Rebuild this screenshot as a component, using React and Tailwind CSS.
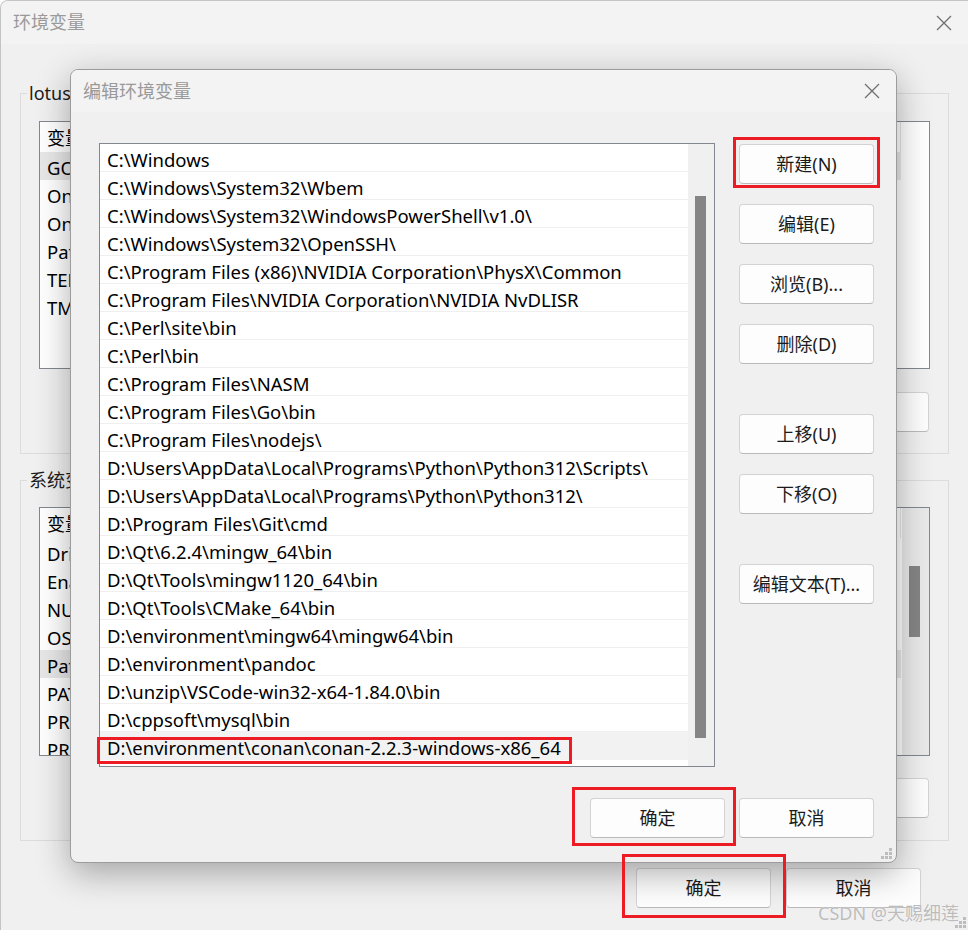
import React from "react";

const PATHS = String.raw`C:\Windows
C:\Windows\System32\Wbem
C:\Windows\System32\WindowsPowerShell\v1.0\
C:\Windows\System32\OpenSSH\
C:\Program Files (x86)\NVIDIA Corporation\PhysX\Common
C:\Program Files\NVIDIA Corporation\NVIDIA NvDLISR
C:\Perl\site\bin
C:\Perl\bin
C:\Program Files\NASM
C:\Program Files\Go\bin
C:\Program Files\nodejs\
D:\Users\AppData\Local\Programs\Python\Python312\Scripts\
D:\Users\AppData\Local\Programs\Python\Python312\
D:\Program Files\Git\cmd
D:\Qt\6.2.4\mingw_64\bin
D:\Qt\Tools\mingw1120_64\bin
D:\Qt\Tools\CMake_64\bin
D:\environment\mingw64\mingw64\bin
D:\environment\pandoc
D:\unzip\VSCode-win32-x64-1.84.0\bin
D:\cppsoft\mysql\bin
D:\environment\conan\conan-2.2.3-windows-x86_64`.split("\n");

const USER_VARS = ["GOPATH", "OneDrive", "OneDriveConsumer", "Path", "TEMP", "TMP"];
const SYS_VARS = [
  "DriverData",
  "EnableLog",
  "NUMBER_OF_PROCESSORS",
  "OS",
  "Path",
  "PATHEXT",
  "PROCESSOR_ARCHITECTURE",
  "PROCESSOR_IDENTIFIER",
  "PROCESSOR_LEVEL",
];

function CloseX() {
  return (
    <svg width="16" height="16" viewBox="0 0 16 16">
      <path d="M1 1L15 15M15 1L1 15" stroke="#707070" strokeWidth="1.3" fill="none" />
    </svg>
  );
}

function Grip() {
  return (
    <svg width="12" height="12" viewBox="0 0 12 12">
      <rect x="8" y="0" width="3" height="3" fill="#bdbdbd" />
      <rect x="4" y="4" width="3" height="3" fill="#bdbdbd" />
      <rect x="8" y="4" width="3" height="3" fill="#bdbdbd" />
      <rect x="0" y="8" width="3" height="3" fill="#bdbdbd" />
      <rect x="4" y="8" width="3" height="3" fill="#bdbdbd" />
      <rect x="8" y="8" width="3" height="3" fill="#bdbdbd" />
    </svg>
  );
}

function Btn({ children, className = "" }) {
  return (
    <div
      className={`flex h-[40px] w-[135px] shrink-0 items-center justify-center rounded-[4px] border border-[#d3d3d3] border-b-[#bababa] bg-[#fdfdfd] text-[18px] text-[#1b1b1b] ${className}`}
    >
      {children}
    </div>
  );
}

function BgList({ items, selected, scroll, height }) {
  return (
    <div className={`flex overflow-hidden border border-[#828790] bg-white ${height}`}>
      <div className="w-[861px] shrink-0">
        <div className="flex h-[30px] items-center border-r border-[#e5e5e5] pl-[7px] pt-[2px] text-[18px]">变量</div>
        {items.map((t, i) => (
          <div
            key={i}
            className={`flex h-[28px] items-center pl-[7px] pt-[3px] text-[18.5px] whitespace-nowrap ${
              i === selected ? "bg-[#e8e8e8]" : ""
            }`}
          >
            {t}
          </div>
        ))}
      </div>
      {scroll ? (
        <div className="relative ml-[1px] flex-1 bg-[#e9e9e9]">
          <div className="absolute left-[7px] top-[58px] h-[71px] w-[11px] bg-[#858585]" />
        </div>
      ) : (
        <div className="flex-1" />
      )}
    </div>
  );
}

function Group({ label, children, className = "" }) {
  return (
    <div className={`relative border border-[#dcdcdc] ${className}`}>
      <span className="absolute left-[6px] top-[-13px] bg-[#f0f0f0] px-[2px] text-[18px] leading-[24px] text-[#1b1b1b]">
        {label}
      </span>
      {children}
    </div>
  );
}

export default function App() {
  return (
    <div className="relative h-[930px] w-[968px] overflow-hidden rounded-tl-[8px] border-l border-t border-[#c4c4c4] bg-[#f0f0f0] font-['Noto_Sans','Noto_Sans_CJK_SC',sans-serif] text-black">
      {/* Background window */}
      <div className="flex h-[43px] items-center justify-between bg-[#f3f3f3] pl-[12px] pr-[16px]">
        <span className="text-[18px] text-[#9a9a9a]">环境变量</span>
        <CloseX />
      </div>
      <div className="flex flex-col px-[19px]">
        <Group label="lotus 的用户变量(U)" className="mt-[49px] h-[361px] px-[18px] pt-[27px]">
          <BgList items={USER_VARS} selected={0} scroll={false} height="h-[248px]" />
          <div className="mt-[23px] flex justify-end gap-[15px] pr-[1px]">
            <Btn className="h-[39px] w-[134px]">新建(N)...</Btn>
            <Btn className="h-[39px] w-[134px]">编辑(E)...</Btn>
            <Btn className="h-[39px] w-[134px]">删除(D)</Btn>
          </div>
        </Group>
        <Group label="系统变量(S)" className="mt-[26px] h-[361px] px-[18px] pt-[26px]">
          <BgList items={SYS_VARS} selected={4} scroll={true} height="h-[249px]" />
          <div className="mt-[22px] flex justify-end gap-[15px] pr-[1px]">
            <Btn className="h-[39px] w-[134px]">新建(W)...</Btn>
            <Btn className="h-[39px] w-[134px]">编辑(I)...</Btn>
            <Btn className="h-[39px] w-[134px]">删除(L)</Btn>
          </div>
        </Group>
        <div className="mt-[27px] flex justify-end gap-[15px] pr-[28px]">
          <Btn className="h-[40px] w-[134px]">确定</Btn>
          <Btn className="h-[40px] w-[134px]">取消</Btn>
        </div>
      </div>
      <div className="absolute bottom-[1px] right-[1px]">
        <Grip />
      </div>

      {/* Foreground dialog */}
      <div className="absolute left-[69px] top-[68px] flex h-[794px] w-[827px] flex-col overflow-hidden rounded-[8px] border border-[#9c9c9c] bg-[#f0f0f0] shadow-[0_10px_34px_rgba(0,0,0,0.32)]">
        <div className="flex h-[42px] shrink-0 items-center justify-between bg-[#f3f3f3] pl-[12px] pr-[16px]">
          <span className="text-[18px] text-[#999999]">编辑环境变量</span>
          <CloseX />
        </div>
        <div className="flex flex-col pl-[28px] pr-[22px] pt-[31px]">
          <div className="flex gap-[24px]">
            <div className="flex h-[624px] w-[616px] overflow-hidden border border-[#828790] bg-white">
              <div className="w-[588px] shrink-0">
                {PATHS.map((p, i) => (
                  <div
                    key={i}
                    className={`flex h-[28px] items-center border-b whitespace-nowrap pl-[7px] pt-[4px] text-[18.5px] ${
                      i === PATHS.length - 1 ? "border-transparent bg-[#f2f2f2]" : "border-[#efefef]"
                    }`}
                  >
                    {p}
                  </div>
                ))}
              </div>
              <div className="relative flex-1 bg-[#f0f0f0]">
                <div className="absolute left-[7px] top-[52px] h-[542px] w-[11px] bg-[#858585]" />
              </div>
            </div>
            <div className="flex flex-col pt-[1px]">
              <Btn>新建(N)</Btn>
              <Btn className="mt-[20px]">编辑(E)</Btn>
              <Btn className="mt-[20px]">浏览(B)...</Btn>
              <Btn className="mt-[20px]">删除(D)</Btn>
              <Btn className="mt-[50px]">上移(U)</Btn>
              <Btn className="mt-[20px]">下移(O)</Btn>
              <Btn className="mt-[50px]">编辑文本(T)...</Btn>
            </div>
          </div>
          <div className="mt-[31px] flex justify-end gap-[14px]">
            <Btn>确定</Btn>
            <Btn>取消</Btn>
          </div>
        </div>
        <div className="absolute bottom-[2px] right-[3px]">
          <Grip />
        </div>
      </div>

      {/* Annotations */}
      <div className="absolute left-[732px] top-[136px] h-[51px] w-[147px] border-[3px] border-[#ed1c24]" />
      <div className="absolute left-[96px] top-[736px] h-[27px] w-[475px] border-[3px] border-[#ed1c24]" />
      <div className="absolute left-[571px] top-[786px] h-[59px] w-[164px] border-[3px] border-[#ed1c24]" />
      <div className="absolute left-[621px] top-[853px] h-[64px] w-[164px] border-[3px] border-[#ed1c24]" />

      <div className="absolute left-[817px] top-[899px] text-[18px] leading-[26px] text-[#bcbcbc] [text-shadow:0_0_1px_#ffffff]">
        CSDN @天赐细莲
      </div>
    </div>
  );
}
